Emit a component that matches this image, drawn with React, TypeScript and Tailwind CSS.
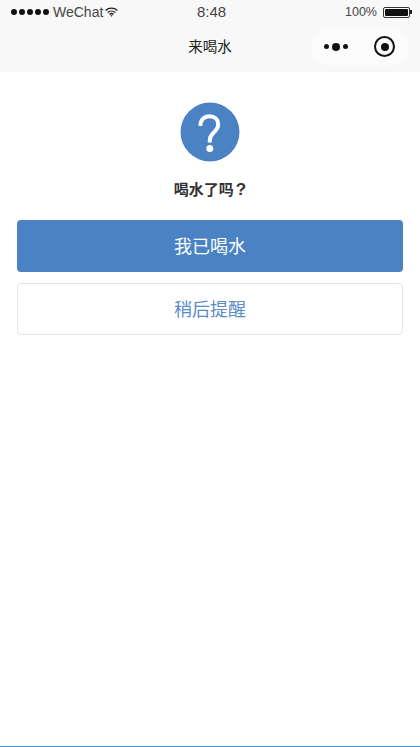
const FONT = "font-['Liberation_Sans','Noto_Sans_CJK_SC',sans-serif]";

function SignalDots() {
  return (
    <div className="flex items-center gap-[2px]">
      <span className="w-[6px] h-[6px] rounded-full bg-[#111111]" />
      <span className="w-[6px] h-[6px] rounded-full bg-[#111111]" />
      <span className="w-[6px] h-[6px] rounded-full bg-[#111111]" />
      <span className="w-[6px] h-[6px] rounded-full bg-[#111111]" />
      <span className="w-[6px] h-[6px] rounded-full bg-[#111111]" />
    </div>
  );
}

function WifiIcon() {
  return (
    <svg className="-ml-[2px]" width="13" height="10" viewBox="0 0 13 10" fill="none" stroke="#222222" strokeWidth="1.4">
      <path d="M0.6 3.4C3.9 0.4 9.1 0.4 12.4 3.4" />
      <path d="M2.6 5.5C4.8 3.6 8.2 3.6 10.4 5.5" />
      <path d="M4.5 7.4C5.6 6.5 7.4 6.5 8.5 7.4" />
      <path d="M6.5 9.8L5.3 8.5C6 8 7 8 7.7 8.5Z" fill="#222222" stroke="none" />
    </svg>
  );
}

function Battery() {
  return (
    <div className="flex items-center">
      <div className="w-[27px] h-[11px] rounded-[2px] border border-[#333333] p-[1px]">
        <div className="w-full h-full bg-[#111111] rounded-[1px]" />
      </div>
      <span className="w-[2px] h-[4px] bg-[#222222]" />
    </div>
  );
}

function QuestionIcon() {
  return (
    <svg width="60" height="60" viewBox="0 0 60 60">
      <circle cx="30" cy="30" r="29.5" fill="#4a82c3" />
      <path
        d="M20.4 24C20.4 17.6 24.4 14.2 29.6 14.2C34.8 14.2 38.2 17.6 38.2 22.2C38.2 26.2 36.2 28.2 33.6 30.6C31 33 29.8 34.8 29.8 38.5V40.5"
        fill="none"
        stroke="#ffffff"
        strokeWidth="4"
      />
      <circle cx="29.8" cy="46.6" r="3.5" fill="#ffffff" />
    </svg>
  );
}

export default function App() {
  return (
    <div className={`${FONT} w-[420px] h-[747px] bg-white flex flex-col border-b border-[#4291db]`}>
      <div className="bg-[#f8f8f8] h-[72px] shrink-0 flex flex-col">
        <div className="h-[24px] pl-[11px] pr-[8px] flex items-center justify-between text-[#333333]">
          <div className="w-[140px] flex items-center gap-[4px]">
            <SignalDots />
            <span className="text-[14px] leading-none text-[#444444]">WeChat</span>
            <WifiIcon />
          </div>
          <span className="text-[15px] leading-none text-[#444444] -mt-[2px]">8:48</span>
          <div className="w-[140px] flex items-center justify-end gap-[6px]">
            <span className="text-[12.5px] leading-none text-[#444444]">100%</span>
            <Battery />
          </div>
        </div>
        <div className="relative flex-1 flex items-center justify-center">
          <span className="text-[14.5px] text-[#222222]">来喝水</span>
          <div className="absolute left-[311px] top-[4px] w-[98px] h-[37px] rounded-full bg-[#fcfcfc] flex items-center">
            <div className="ml-[13px] flex items-center gap-[3px]">
              <span className="w-[5px] h-[5px] rounded-full bg-[#111111]" />
              <span className="w-[8px] h-[8px] rounded-full bg-[#111111]" />
              <span className="w-[5px] h-[5px] rounded-full bg-[#111111]" />
            </div>
            <div className="ml-[26px] w-[21px] h-[21px] rounded-full border-[2.5px] border-[#111111] flex items-center justify-center">
              <span className="w-[8px] h-[8px] rounded-full bg-[#111111]" />
            </div>
          </div>
        </div>
      </div>
      <div className="flex-1 flex flex-col items-center px-[17px] pt-[30px]">
        <QuestionIcon />
        <p className="mt-[18px] text-[15px] leading-[20px] font-bold text-[#333333]">
          喝水了吗<span className="ml-[2px] text-[17px]">?</span>
        </p>
        <button className="mt-[20px] w-full h-[52px] pt-[3px] rounded-[4px] bg-[#4a82c3] text-white text-[18px]">
          我已喝水
        </button>
        <button className="mt-[11px] w-full h-[52px] pt-[3px] rounded-[4px] bg-white border border-[#e6e6e6] text-[#5a8cc8] text-[18px]">
          稍后提醒
        </button>
      </div>
    </div>
  );
}
